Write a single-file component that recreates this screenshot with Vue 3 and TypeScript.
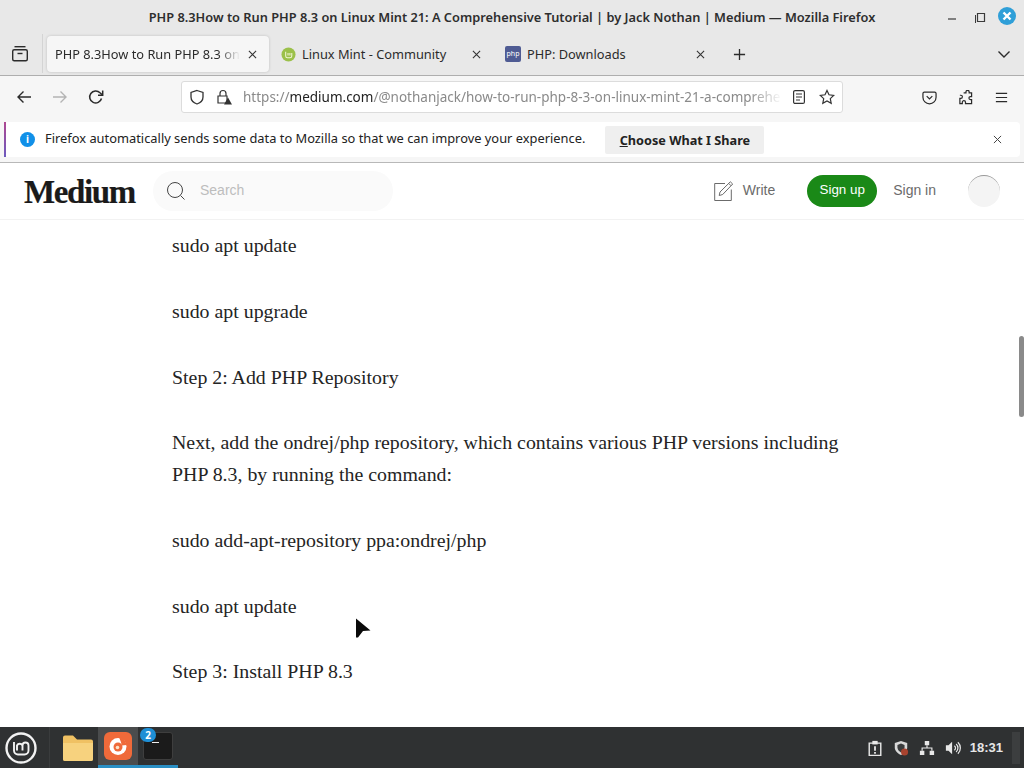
<template>
  <div class="desktop">
    <div class="titlebar">
      <div class="title">{{ windowTitle }}</div>
      <div class="window-buttons">
        <svg class="win-ic" viewBox="0 0 16 16"><path d="M3 11h8" stroke="#3a3a3a" stroke-width="1.2" /></svg>
        <svg class="win-ic" viewBox="0 0 16 16" fill="none" stroke="#3a3a3a"><path d="M5.5 5.500h7v8h-7z" stroke-width="1.2" /><path d="M3.500 7v8h0" stroke-width="1" /></svg>
        <span class="win-close">
          <svg viewBox="0 0 18 18"><path d="M5.500 5.500l7 7M12.500 5.500l-7 7" stroke="#fff" stroke-width="2.400" /></svg>
        </span>
      </div>
    </div>

    <div class="tabbar">
      <svg class="tabs-ic" viewBox="0 0 18 18" fill="none" stroke="#2b2b2b" stroke-width="1.400">
        <path d="M3.500 1.700h11" /><rect x="1.700" y="4.700" width="14.600" height="11" rx="1.500" /><path d="M6.500 8.500h5" />
      </svg>
      <div class="tab-sep"></div>
      <div class="tab tab-active">
        <span class="tab-label fade">PHP 8.3How to Run PHP 8.3 on</span>
        <svg class="tab-x" viewBox="0 0 10 10"><path d="M1 1l8 8M9 1l-8 8" stroke="#333" stroke-width="1.200" /></svg>
      </div>
      <div class="tab tab-other">
        <svg class="favicon" viewBox="0 0 16 16">
          <circle cx="8" cy="8" r="7.500" fill="#9bc04a" />
          <path d="M5 5v4.500a2 2 0 0 0 2 2h2.500a2 2 0 0 0 2-2V6.500M7.500 9V6.500M9.500 9V6.500" fill="none" stroke="#f2f6d8" stroke-width="1.100" />
        </svg>
        <span class="tab-label">Linux Mint - Community</span>
        <svg class="tab-x" viewBox="0 0 10 10"><path d="M1 1l8 8M9 1l-8 8" stroke="#333" stroke-width="1.200" /></svg>
      </div>
      <div class="tab tab-other">
        <span class="php-icon">php</span>
        <span class="tab-label">PHP: Downloads</span>
        <svg class="tab-x" viewBox="0 0 10 10"><path d="M1 1l8 8M9 1l-8 8" stroke="#333" stroke-width="1.200" /></svg>
      </div>
      <svg class="plus" viewBox="0 0 14 14"><path d="M7 1v12M1 7h12" stroke="#2b2b2b" stroke-width="1.400" /></svg>
      <svg class="chev" viewBox="0 0 14 14" fill="none"><path d="M1.500 4.500L7 10l5.500-5.500" stroke="#2b2b2b" stroke-width="1.400" /></svg>
    </div>

    <div class="toolbar">
      <svg class="nav-ic back" viewBox="0 0 16 16" fill="none" stroke="#2b2b2b" stroke-width="1.400"><path d="M15 8H2M7.500 2.500L2 8l5.500 5.500" /></svg>
      <svg class="nav-ic forward" viewBox="0 0 16 16" fill="none" stroke="#b4b4b4" stroke-width="1.400"><path d="M1 8h13M8.500 2.500L14 8l-5.500 5.500" /></svg>
      <svg class="nav-ic reload" viewBox="0 0 16 16" fill="none" stroke="#2b2b2b" stroke-width="1.500"><path d="M13.500 9.500A6 6 0 1 1 12 3.800L14.500 6" /><path d="M14.700 1.500v4.700H10" /></svg>
      <div class="urlbar">
        <svg class="url-ic shield" viewBox="0 0 16 16" fill="none" stroke="#333" stroke-width="1.300"><path d="M8 1.500l6 2v4.500c0 3.500-3 6-6 7-3-1-6-3.500-6-7V3.500z" /></svg>
        <svg class="url-ic lock" viewBox="0 0 16 16" fill="none" stroke="#333" stroke-width="1.200">
          <path d="M4 7V4.500a3 3 0 0 1 6 0V7M2 7h9v7H2z" />
          <path d="M12 8.500l4 7H8z" fill="#333" stroke="none" />
        </svg>
        <div class="url"><span class="url-dim">https://</span><span class="url-host">medium.com</span><span class="url-dim">/@nothanjack/how-to-run-php-8-3-on-linux-mint-21-a-comprehe</span></div>
        <svg class="url-ic reader" viewBox="0 0 14 16" fill="none" stroke="#333" stroke-width="1.200"><rect x="1.600" y="1.600" width="10.800" height="12.800" rx="1.500" /><path d="M4 5h6M4 8h6M4 11h4" /></svg>
        <svg class="url-ic star" viewBox="0 0 16 16" fill="none" stroke="#333" stroke-width="1.200"><path d="M8 1.500l2 4.300 4.700.6-3.400 3.200.9 4.700L8 12l-4.200 2.300.9-4.700L1.300 6.400 6 5.800z" /></svg>
      </div>
      <div class="toolbar-right">
        <svg class="tool-ic" viewBox="0 0 16 16" fill="none" stroke="#2b2b2b" stroke-width="1.300"><path d="M2.500 2.200h11a1.500 1.500 0 0 1 1.500 1.500v4a7 7 0 0 1-14 0v-4a1.500 1.500 0 0 1 1.500-1.500z" /><path d="M5 6.500L8 9.500l3-3" /></svg>
        <svg class="tool-ic" viewBox="0 0 16 16" fill="none" stroke="#2b2b2b" stroke-width="1.300"><path d="M6 3.500h2.500V2.500a1.700 1.700 0 0 1 3.400 0v1h2.600v4h-1.200a1.600 1.600 0 0 0 0 3.300h1.200V15H8v-1.500a1.700 1.700 0 0 0-3.400 0V15H2V9.500h1a1.700 1.700 0 0 0 0-3.400H2" transform="translate(0 -.5)" /></svg>
        <svg class="tool-ic" viewBox="0 0 16 16" fill="none" stroke="#2b2b2b" stroke-width="1.300"><path d="M2 3.500h12M2 8h12M2 12.500h12" /></svg>
      </div>
    </div>

    <div class="notice-wrap">
      <div class="notice">
        <span class="info-dot">i</span>
        <span class="notice-text">Firefox automatically sends some data to Mozilla so that we can improve your experience.</span>
        <span class="notice-btn"><u>C</u>hoose What I Share</span>
        <svg class="notice-x" viewBox="0 0 10 10"><path d="M1 1l8 8M9 1l-8 8" stroke="#444" stroke-width="1.100" /></svg>
      </div>
    </div>

    <header class="medium-head">
      <span class="logo">Medium</span>
      <div class="search">
        <svg class="search-ic" viewBox="0 0 20 20" fill="none" stroke="#444" stroke-width="1"><circle cx="9" cy="9" r="7.500" /><path d="M14.500 14.500l4 4" /></svg>
        <span class="search-text">Search</span>
      </div>
      <div class="head-right">
        <svg class="write-ic" viewBox="0 0 20 20" fill="none" stroke="#6b6b6b" stroke-width="1"><path d="M11 2.500H.7v17h16.600V8.500" /><path d="M6 11l-.8 3.500L8.700 13.500 18.700 3 16.300.8zM14.800 2.500l2.300 2.300" /></svg>
        <span class="write">Write</span>
        <span class="signup">Sign up</span>
        <span class="signin">Sign in</span>
        <span class="avatar"></span>
      </div>
    </header>

    <main class="article">
      <p v-for="(para, i) in paragraphs" :key="i">{{ para }}</p>
      <div class="scrollbar"></div>
      <svg class="cursor" viewBox="0 0 16 20"><path d="M1 0.500L15.500 12.500 8 13 3 19.500H1z" fill="#0a0a0a" /></svg>
    </main>

    <footer class="panel">
      <svg class="mint" viewBox="0 0 32 32" fill="none" stroke="#f2f2f2">
        <circle cx="16" cy="16" r="14.500" stroke-width="2.400" />
        <path d="M9 10v8.500a4 4 0 0 0 4 4h6.500a4 4 0 0 0 4-4v-5a3 3 0 0 0-6 0v5M17.500 13.500a3 3 0 0 0-5.500 0v5" stroke-width="1.900" />
      </svg>
      <div class="panel-sep"></div>
      <div class="launcher">
        <svg class="folder" viewBox="0 0 30 26">
          <path d="M0 2.500A2 2 0 0 1 2 .5h8l4 4h14a2 2 0 0 1 2 2V24a2 2 0 0 1-2 2H2a2 2 0 0 1-2-2z" fill="#f0c163" />
          <path d="M0 8h30v16a2 2 0 0 1-2 2H2a2 2 0 0 1-2-2z" fill="#f7d27e" />
        </svg>
      </div>
      <div class="launcher launcher-on launcher-hover">
        <span class="fx">
          <svg viewBox="0 0 20 20">
            <circle cx="10" cy="10.500" r="8.500" fill="#fff" />
            <circle cx="10" cy="11" r="4.500" fill="#ef6a3a" />
            <circle cx="9.500" cy="11.500" r="1.800" fill="#fde3c8" />
            <path d="M11 1c4 1 7 4 7.500 8l-5 .5c0-3-1.500-5.500-2.500-8.500z" fill="#ef6a3a" />
          </svg>
        </span>
      </div>
      <div class="launcher launcher-on">
        <span class="term"><span class="term-line"></span></span>
        <span class="badge">2</span>
      </div>
      <div class="tray">
        <svg class="tray-ic" viewBox="0 0 16 18"><path d="M1.500 3.500h13v14h-13z" fill="none" stroke="#e8e8e8" stroke-width="1.600" /><path d="M5 1h6v4H5z" fill="#e8e8e8" /><path d="M7 7h2v5H7zM7 13.500h2v2H7z" fill="#e8e8e8" /></svg>
        <svg class="tray-ic" viewBox="0 0 18 18"><path d="M9 1l7 2.500v5c0 4-3.500 7-7 8.500-3.500-1.500-7-4.500-7-8.500v-5z" fill="#d8d8d8" /><path d="M9 4l4 1.500v3c0 2.500-2 4.500-4 5.500-2-1-4-3-4-5.500v-3z" fill="#3a3c3d" /><circle cx="13" cy="13.500" r="4" fill="#a8432f" /></svg>
        <svg class="tray-ic" viewBox="0 0 18 18" fill="#e8e8e8"><path d="M6.500 1h5v5h-5zM1 12h5v5H1zM12 12h5v5h-5z" /><path d="M9 6v3M3.500 12V9h11v3" fill="none" stroke="#e8e8e8" stroke-width="1.300" /></svg>
        <svg class="tray-ic" viewBox="0 0 18 18" fill="none" stroke="#e8e8e8" stroke-width="1.400"><path d="M1 6h3l4-4v14l-4-4H1z" fill="#e8e8e8" stroke="none" /><path d="M10.500 6.500a3 3 0 0 1 0 5M12.500 4.500a6 6 0 0 1 0 9M14.500 2.500a9 9 0 0 1 0 13" /></svg>
        <span class="clock">18:31</span>
        <span class="tray-end"></span>
      </div>
    </footer>
  </div>
</template>

<script setup lang="ts">
const windowTitle =
  'PHP 8.3How to Run PHP 8.3 on Linux Mint 21: A Comprehensive Tutorial | by Jack Nothan | Medium — Mozilla Firefox'

const paragraphs: string[] = [
  'sudo apt update',
  'sudo apt upgrade',
  'Step 2: Add PHP Repository',
  'Next, add the ondrej/php repository, which contains various PHP versions including PHP 8.3, by running the command:',
  'sudo add-apt-repository ppa:ondrej/php',
  'sudo apt update',
  'Step 3: Install PHP 8.3',
]
</script>

<style>
html,
body {
  margin: 0;
  overflow: hidden;
}
</style>

<style scoped>
.desktop {
  width: 1024px;
  height: 768px;
  display: flex;
  flex-direction: column;
  overflow: hidden;
  background: #fff;
  font-family: "Noto Sans", "Open Sans", sans-serif;
}

.titlebar {
  height: 34px;
  flex-shrink: 0;
  background: #e8e8e8;
  position: relative;
  display: flex;
  align-items: center;
  justify-content: center;
}

.title {
  font-size: 12.8px;
  font-weight: 600;
  color: #2e2e2e;
  white-space: nowrap;
}

.window-buttons {
  position: absolute;
  right: 8px;
  top: 7px;
  display: flex;
  align-items: center;
  gap: 11px;
}

.win-ic {
  width: 16px;
  height: 16px;
}

.win-close {
  width: 18px;
  height: 18px;
  margin-left: -1px;
  border-radius: 50%;
  background: #2f9fd8;
  display: block;
}

.win-close svg {
  display: block;
}

.tabbar {
  height: 40px;
  padding-bottom: 1px;
  flex-shrink: 0;
  display: flex;
  align-items: center;
  background: #e8e8e8;
  border-bottom: 1px solid #aeaeae;
}

.tabs-ic {
  width: 18px;
  height: 18px;
  margin-left: 11px;
  flex-shrink: 0;
}

.tab-sep {
  width: 1px;
  height: 44px;
  margin: -6px 4px 0 13px;
  background: #d4d4d4;
  flex-shrink: 0;
}

.tab {
  height: 36px;
  display: flex;
  align-items: center;
  font-size: 12.8px;
  color: #2b2b2b;
  flex-shrink: 0;
  box-sizing: border-box;
  position: relative;
}

.tab-active {
  width: 222px;
  background: #f6f6f6;
  border-radius: 4px;
  padding: 0 8px;
  box-shadow: 0 0 3px rgba(0, 0, 0, 0.18);
}

.tab-label {
  white-space: nowrap;
}

.fade {
  -webkit-mask-image: linear-gradient(to right, #000 88%, transparent);
  mask-image: linear-gradient(to right, #000 88%, transparent);
}

.tab-x {
  width: 9px;
  height: 9px;
  position: absolute;
  right: 12px;
  top: 14px;
}

.favicon {
  width: 15px;
  height: 15px;
  margin-right: 6px;
  flex-shrink: 0;
}

.tab-other {
  width: 224px;
  padding-left: 12px;
}

.php-icon {
  width: 16px;
  height: 16px;
  border-radius: 2px;
  background: #4f5b93;
  color: #fff;
  font-size: 7px;
  line-height: 16px;
  text-align: center;
  margin-right: 6px;
  flex-shrink: 0;
}

.plus {
  width: 13px;
  height: 13px;
  margin-left: 16px;
  flex-shrink: 0;
}

.chev {
  width: 14px;
  height: 14px;
  margin-left: auto;
  margin-right: 13px;
  flex-shrink: 0;
}

.toolbar {
  height: 42px;
  flex-shrink: 0;
  display: flex;
  align-items: center;
  background: #f6f6f6;
}

.nav-ic {
  width: 16px;
  height: 16px;
  flex-shrink: 0;
}

.back {
  margin-left: 16px;
}

.forward {
  margin-left: 20px;
}

.reload {
  margin-left: 20px;
}

.urlbar {
  width: 662px;
  height: 32px;
  box-sizing: border-box;
  background: #fff;
  border: 1px solid #dcdcdc;
  border-radius: 3px;
  display: flex;
  align-items: center;
  padding: 0 7px;
  margin-left: 77px;
}

.url-ic {
  width: 16px;
  height: 16px;
  flex-shrink: 0;
}

.lock {
  margin-left: 11px;
}

.url {
  flex: 1;
  min-width: 0;
  margin-left: 11px;
  font-size: 13.5px;
  white-space: nowrap;
  -webkit-mask-image: linear-gradient(to right, #000 94%, transparent);
  mask-image: linear-gradient(to right, #000 94%, transparent);
}

.url-dim {
  color: #8a8a8a;
}

.url-host {
  color: #222;
}

.reader {
  width: 14px;
  margin-left: 10px;
}

.star {
  margin-left: 13px;
}

.toolbar-right {
  display: flex;
  align-items: center;
  margin-left: 79px;
  gap: 21px;
}

.tool-ic {
  width: 15px;
  height: 15px;
}

.notice-wrap {
  height: 45px;
  flex-shrink: 0;
  box-sizing: border-box;
  padding: 4px;
  background: #f6f6f6;
  border-bottom: 1px solid #b8b8b8;
}

.notice {
  height: 35px;
  box-sizing: border-box;
  background: #fff;
  border-radius: 4px;
  border-left: 2px solid;
  border-image: linear-gradient(to bottom, #b0478f, #6a5ac0) 1;
  display: flex;
  align-items: center;
  padding-left: 14px;
  position: relative;
}

.info-dot {
  width: 15px;
  height: 15px;
  border-radius: 50%;
  background: #1190e8;
  color: #fff;
  font-size: 10px;
  font-weight: 700;
  line-height: 15px;
  text-align: center;
  flex-shrink: 0;
}

.notice-text {
  margin-left: 10px;
  margin-bottom: 3px;
  font-size: 12.86px;
  color: #222;
  white-space: nowrap;
}

.notice-btn {
  margin-left: 20px;
  width: 159px;
  height: 28px;
  line-height: 28px;
  text-align: center;
  border-radius: 2px;
  background: #efefef;
  font-size: 12.7px;
  font-weight: 700;
  color: #222;
  white-space: nowrap;
}

.notice-x {
  width: 9px;
  height: 9px;
  position: absolute;
  right: 18px;
  top: 13px;
}

.medium-head {
  height: 57px;
  flex-shrink: 0;
  box-sizing: border-box;
  border-bottom: 1px solid #f2f2f2;
  display: flex;
  align-items: center;
  padding-left: 24px;
  background: #fff;
}

.logo {
  font-family: "Liberation Serif", serif;
  font-size: 33px;
  font-weight: 700;
  letter-spacing: -1.4px;
  color: #1a1a1a;
  width: 128px;
  flex-shrink: 0;
  margin-top: 2px;
  -webkit-text-stroke: 0.2px #1a1a1a;
}

.search {
  width: 240px;
  height: 40px;
  margin-left: 1px;
  border-radius: 20px;
  background: #fafafa;
  display: flex;
  align-items: center;
  padding-left: 13px;
  box-sizing: border-box;
}

.search-ic {
  width: 20px;
  height: 20px;
}

.search-text {
  margin-left: 14px;
  margin-bottom: 2px;
  font-family: "Liberation Sans", sans-serif;
  font-size: 14px;
  color: #bdbdbd;
}

.head-right {
  margin-left: auto;
  display: flex;
  align-items: center;
  font-family: "Liberation Sans", sans-serif;
  font-size: 14px;
  color: #6b6b6b;
  padding-right: 24px;
}

.write-ic {
  width: 20px;
  height: 20px;
  margin-right: 9px;
}

.write,
.signin {
  margin-bottom: 2px;
}

.signup {
  margin-left: 32px;
  width: 70px;
  height: 32px;
  line-height: 30px;
  text-align: center;
  border-radius: 16px;
  background: #1a8917;
  color: #fff;
  font-size: 13.4px;
}

.signin {
  margin-left: 16px;
}

.avatar {
  width: 32px;
  height: 32px;
  margin-left: 32px;
  border-radius: 50%;
  background: #f4f4f4;
  border-top: 1px solid #999;
  box-sizing: border-box;
}

.article {
  flex: 1;
  min-height: 0;
  overflow: hidden;
  position: relative;
  background: #fff;
  padding: 9.3px 172px 0;
  box-sizing: border-box;
  font-family: "Liberation Serif", serif;
  font-size: 19.88px;
  line-height: 32px;
  color: #242424;
}

.article p {
  margin: 0 0 33.65px;
}

.scrollbar {
  position: absolute;
  right: 0;
  top: 116px;
  width: 5px;
  height: 81px;
  background: #8a8a8a;
  border-radius: 3px;
}

.cursor {
  position: absolute;
  left: 355px;
  top: 398px;
  width: 16px;
  height: 20px;
}

.panel {
  height: 41px;
  flex-shrink: 0;
  background: #2f3132;
  display: flex;
  align-items: center;
}

.mint {
  width: 32px;
  height: 32px;
  margin-left: 5px;
  flex-shrink: 0;
}

.panel-sep {
  width: 1px;
  height: 41px;
  margin: 0 8px 0 12px;
  background: #3a3c3d;
  flex-shrink: 0;
}

.launcher {
  width: 40px;
  height: 41px;
  display: flex;
  align-items: center;
  justify-content: center;
  position: relative;
  box-sizing: border-box;
  flex-shrink: 0;
}

.launcher-on {
  border-bottom: 3px solid #2a8fc4;
}

.launcher-hover {
  background: #4a4c4d;
}

.folder {
  width: 30px;
  height: 26px;
}

.fx {
  width: 28px;
  height: 28px;
  border-radius: 6px;
  background: #ef6a3a;
  display: flex;
  align-items: center;
  justify-content: center;
}

.fx svg {
  width: 20px;
  height: 20px;
}

.term {
  width: 30px;
  height: 28px;
  border-radius: 3px;
  background: #1b1b1b;
  border: 1px solid #3e3e3e;
  box-sizing: border-box;
  position: relative;
}

.term-line {
  position: absolute;
  left: 8px;
  top: 9px;
  width: 7px;
  height: 1px;
  background: #eee;
}

.badge {
  position: absolute;
  left: 2px;
  top: 1px;
  width: 16px;
  height: 14px;
  border-radius: 7px;
  background: #1e8fd6;
  color: #fff;
  font-size: 10px;
  font-weight: 700;
  line-height: 14px;
  text-align: center;
}

.tray {
  margin-left: auto;
  display: flex;
  align-items: center;
  gap: 10px;
  padding-right: 4px;
}

.tray-ic {
  width: 16px;
  height: 16px;
  flex-shrink: 0;
}

.clock {
  margin-left: -1px;
  font-family: "Liberation Sans", sans-serif;
  font-size: 13px;
  font-weight: 700;
  color: #e6e6e6;
}

.tray-end {
  width: 8px;
  height: 32px;
  margin-left: -1px;
  background: #3c3e3f;
}
</style>
